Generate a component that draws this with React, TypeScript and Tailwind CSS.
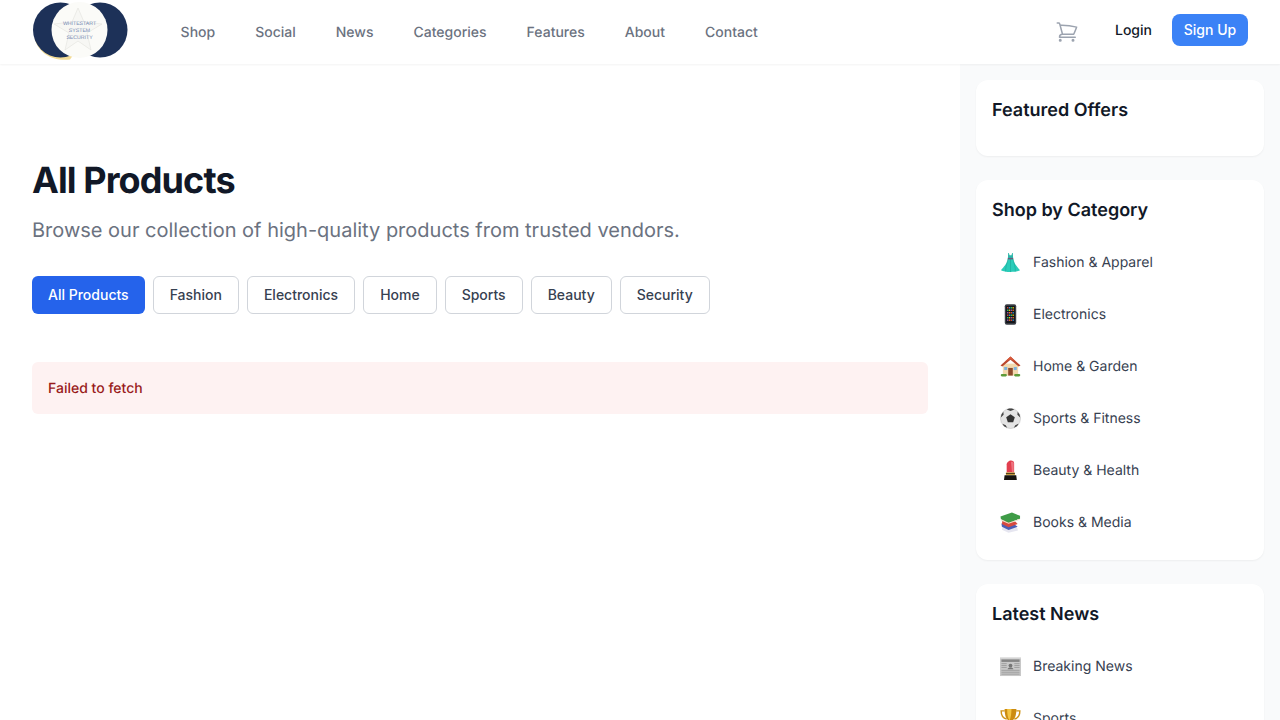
import React from "react";

const navLinks = ["Shop", "Social", "News", "Categories", "Features", "About", "Contact"];
const filters = ["All Products", "Fashion", "Electronics", "Home", "Sports", "Beauty", "Security"];

function Logo() {
  return (
    <svg viewBox="0 0 96 60" className="w-24 h-[60px] shrink-0">
      <path d="M2.5 38 C 6 53 20 61.5 38 59.5 L 42 54 L 20 48 Z" fill="#f3dc96" />
      <circle cx="28.5" cy="30" r="27.5" fill="#1d3158" />
      <circle cx="68" cy="30" r="27.5" fill="#1d3158" />
      <circle cx="47.5" cy="30" r="28" fill="#fbfbf8" />
      <polygon
        points="46,8 52,22 70,24 55,33 59,50 46,41 33,50 37,33 22,24 40,22"
        fill="#f7f7f4"
        stroke="#e2e2de"
        strokeWidth="0.6"
      />
      <g fill="#7388b3" fontFamily="Liberation Sans, sans-serif" fontSize="5.2" textAnchor="middle">
        <text x="47.5" y="24.5">WHITESTART</text>
        <text x="47.5" y="31.5">SYSTEM</text>
        <text x="47.5" y="38.5">SECURITY</text>
      </g>
    </svg>
  );
}

function Dress() {
  return (
    <svg viewBox="0 0 22 22" className="w-[21px] h-[21px]">
      <path d="M8.6 1 L9.3 1 L10 3.5 L12 3.5 L12.7 1 L13.4 1 L13.8 7 L8.2 7 Z" fill="#2bb7a9" />
      <path d="M8.4 7 L13.6 7 C14.5 12 18.5 16 21 19 C17 21.5 5 21.5 1 19 C3.5 16 7.5 12 8.4 7 Z" fill="#2accb9" />
      <path d="M8.4 7 C7.5 12 5.5 16 6 20.5 M11 7 L11 21 M13.6 7 C14.5 12 16.5 16 16 20.5" stroke="#18a596" strokeWidth="0.6" fill="none" />
      <rect x="8.2" y="6.2" width="5.6" height="1.5" fill="#6a5a7c" />
    </svg>
  );
}

function Phone() {
  const colors = ["#e74c3c", "#3498db", "#2ecc71", "#f1c40f", "#9b59b6", "#e67e22"];
  const dots = [];
  for (let r = 0; r < 6; r++) {
    for (let c = 0; c < 4; c++) {
      dots.push(<rect key={r + "-" + c} x={7.4 + c * 1.9} y={3.2 + r * 2.6} width="1.4" height="1.5" fill={colors[(r * 2 + c) % 6]} />);
    }
  }
  return (
    <svg viewBox="0 0 22 22" className="w-[21px] h-[21px]">
      <rect x="5" y="0.3" width="12" height="21.4" rx="2" fill="#3a3e45" />
      <rect x="6.4" y="2" width="9.2" height="18" fill="#14161a" />
      {dots}
    </svg>
  );
}

function House() {
  return (
    <svg viewBox="0 0 22 22" className="w-[21px] h-[21px]">
      <rect x="3" y="8" width="16" height="12.5" fill="#f3d9ae" />
      <path d="M11 0.5 L21.5 10 L19.5 11 L11 4 L2.5 11 L0.5 10 Z" fill="#b9472d" />
      <path d="M11 0.5 L17 6 L11 3.5 L5 6 Z" fill="#d85a3c" />
      <rect x="8.6" y="12.5" width="4.8" height="8" fill="#8c4a2b" />
      <rect x="4.4" y="11.5" width="3.2" height="3.2" fill="#7fb2dd" />
      <rect x="14.4" y="11.5" width="3.2" height="3.2" fill="#7fb2dd" />
      <rect x="0.8" y="18.8" width="6.4" height="2.6" rx="1.2" fill="#5d9b3a" />
      <rect x="14.8" y="18.8" width="6.4" height="2.6" rx="1.2" fill="#5d9b3a" />
    </svg>
  );
}

function Ball() {
  return (
    <svg viewBox="0 0 22 22" className="w-[21px] h-[21px]">
      <circle cx="11" cy="11" r="10.5" fill="#e4e4e4" stroke="#a8a8a8" strokeWidth="0.4" />
      <polygon points="11,6.5 15.5,9.8 13.8,15 8.2,15 6.5,9.8" fill="#333" />
      <path d="M7 1.5 L11 3.2 L15 1.5 L12.5 0.6 L9.5 0.6 Z" fill="#444" />
      <path d="M0.8 10 L3.8 7 L3.5 4 L1.5 6.8 Z M21.2 10 L18.2 7 L18.5 4 L20.5 6.8 Z" fill="#444" />
      <path d="M2.5 16.5 L6 18 L7.5 20.8 L4.2 19 Z M19.5 16.5 L16 18 L14.5 20.8 L17.8 19 Z" fill="#444" />
    </svg>
  );
}

function Lipstick() {
  return (
    <svg viewBox="0 0 22 22" className="w-[21px] h-[21px]">
      <path d="M7 13 L7 4.5 C7 2.5 9.5 0.5 11.5 0.5 C13.5 0.5 14.8 1.5 14.8 3.5 L14.8 13 Z" fill="#e23f4f" />
      <path d="M11.5 2 C13 1.5 14.4 2 14.4 3.5 L14.4 13 L12.6 13 Z" fill="#ee7480" />
      <rect x="6.2" y="13" width="9.4" height="3" fill="#c9a03f" />
      <rect x="6.2" y="13.9" width="9.4" height="0.8" fill="#2a2010" />
      <path d="M4.8 16 L17 16 L17.6 21 L4.2 21 Z" fill="#17130f" />
    </svg>
  );
}

function Books() {
  return (
    <svg viewBox="0 0 22 22" className="w-[21px] h-[21px]">
      <path d="M3 15 L18 16 L18.8 19.5 L9 21.8 L2 18.5 Z" fill="#e6e6f0" />
      <path d="M1.5 12 L16 13.5 L18.5 15.5 L9 18.8 L2 15.5 Z" fill="#4d5fb5" />
      <path d="M2.5 9 L16 10 L18.5 12.5 L9 16 L2 12.5 Z" fill="#d84a3f" />
      <path d="M0.5 4.8 L12.5 0.5 L21 4 L21 7 L9 11.2 L1 7.5 Z" fill="#3f9c47" />
      <path d="M1 7.5 L9 11.2 L21 7 L20.5 8.2 L9 12.4 L1.5 9.2 Z" fill="#ece6d0" />
    </svg>
  );
}

function Newspaper() {
  return (
    <svg viewBox="0 0 22 22" className="w-[21px] h-[21px]">
      <rect x="0" y="1.5" width="22" height="19.5" fill="#c8c8c8" />
      <rect x="0" y="1.5" width="22" height="1" fill="#e4e4e4" />
      <rect x="1.5" y="3.6" width="19" height="2.6" fill="#858585" />
      <path d="M1.5 8 H7 M1.5 10 H7 M1.5 12 H7 M15 8 H20.5 M15 10 H20.5 M15 12 H20.5 M1.5 15 H20.5 M1.5 17 H20.5 M1.5 19 H20.5" stroke="#939393" strokeWidth="0.8" />
      <circle cx="11" cy="10" r="2" fill="#757575" />
      <path d="M8 14 C8 11.5 14 11.5 14 14 Z" fill="#757575" />
    </svg>
  );
}

function Trophy() {
  return (
    <svg viewBox="0 0 22 22" className="w-[21px] h-[21px]">
      <path d="M5 3 H1.2 C1.2 8 3.5 11 7 11.5 M17 3 H20.8 C20.8 8 18.5 11 15 11.5" stroke="#cf9418" strokeWidth="1.5" fill="none" />
      <path d="M4.8 1 H17.2 C17.2 8 15.5 12 12.3 13.5 L12.3 17 L9.7 17 L9.7 13.5 C6.5 12 4.8 8 4.8 1 Z" fill="#cc8c10" />
      <path d="M7.5 1 H12 C12 7 11 11 10 13 C8.3 11 7.5 7 7.5 1 Z" fill="#f4c542" />
      <rect x="7" y="17" width="8" height="4" fill="#7a4a12" />
    </svg>
  );
}

const categories = [
  { icon: <Dress />, label: "Fashion & Apparel" },
  { icon: <Phone />, label: "Electronics" },
  { icon: <House />, label: "Home & Garden" },
  { icon: <Ball />, label: "Sports & Fitness" },
  { icon: <Lipstick />, label: "Beauty & Health" },
  { icon: <Books />, label: "Books & Media" },
];

const news = [
  { icon: <Newspaper />, label: "Breaking News" },
  { icon: <Trophy />, label: "Sports" },
];

function SideList({ items }: { items: { icon: React.ReactNode; label: string }[] }) {
  return (
    <ul className="flex flex-col gap-2">
      {items.map((item) => (
        <li key={item.label} className="h-11 px-2 flex items-center gap-3 text-sm text-[#374151]">
          {item.icon}
          <span className="pt-0.5">{item.label}</span>
        </li>
      ))}
    </ul>
  );
}

export default function App() {
  return (
    <div className="h-screen overflow-hidden bg-white flex flex-col font-['Inter',sans-serif] antialiased [text-rendering:geometricPrecision]">
      <header className="h-16 shrink-0 shadow-[0_1px_2px_rgba(0,0,0,0.05)] flex items-center px-8 relative">
        <div className="h-[60px] self-start">
          <Logo />
        </div>
        <nav className="ml-[52.6px] pt-0.5 flex gap-10 text-sm font-[450] text-[#6b7280]">
          {navLinks.map((link) => (
            <a key={link} href="#">
              {link}
            </a>
          ))}
        </nav>
        <div className="ml-auto flex items-center mb-1">
          <svg viewBox="0 0 24 24" fill="none" className="w-6 h-6 mt-1 text-[#9ca3af]" stroke="currentColor" strokeWidth="1.5" strokeLinecap="round" strokeLinejoin="round">
            <path d="M2.25 3h1.386c.51 0 .955.343 1.087.835l.383 1.437M7.5 14.25a3 3 0 00-3 3h15.75m-12.75-3h11.218c1.121-2.3 2.1-4.684 2.924-7.138a60.114 60.114 0 00-16.536-1.84M7.5 14.25L5.106 5.272M6 20.25a.75.75 0 11-1.5 0 .75.75 0 011.5 0zm12.75 0a.75.75 0 11-1.5 0 .75.75 0 011.5 0z" />
          </svg>
          <a href="#" className="ml-9 pt-0.5 text-sm font-[450] text-[#111827]">
            Login
          </a>
          <button className="ml-5 h-8 w-[76px] rounded-lg bg-[#3b82f6] text-sm font-[450] text-white">Sign Up</button>
        </div>
      </header>

      <div className="flex flex-1 min-h-0">
        <main className="w-[960px] shrink-0 px-8 pt-24">
          <h1 className="text-4xl font-bold tracking-tight text-[#111827]">All Products</h1>
          <p className="mt-4 text-xl text-[#6b7280]">Browse our collection of high-quality products from trusted vendors.</p>
          <div className="mt-8 flex gap-2">
            {filters.map((f, i) => (
              <button
                key={f}
                className={
                  i === 0
                    ? "h-[38px] px-4 rounded-md bg-[#2563eb] text-sm font-[450] text-white"
                    : "h-[38px] px-4 rounded-md border border-[#d1d5db] bg-white text-sm font-[450] text-[#374151]"
                }
              >
                {f}
              </button>
            ))}
          </div>
          <div className="mt-12 h-[52px] px-4 pt-0.5 flex items-center rounded-md bg-[#fef2f2] text-sm font-[450] text-[#991b1b]">
            Failed to fetch
          </div>
        </main>

        <aside className="flex-1 bg-[#f9fafb] p-4 flex flex-col gap-6">
          <section className="bg-white rounded-xl shadow-[0_1px_2px_rgba(0,0,0,0.05)] p-4 h-[76px] shrink-0">
            <h2 className="pt-px text-lg font-semibold text-[#111827]">Featured Offers</h2>
          </section>
          <section className="bg-white rounded-xl shadow-[0_1px_2px_rgba(0,0,0,0.05)] p-4 shrink-0">
            <h2 className="pt-px mb-[15px] text-lg font-semibold text-[#111827]">Shop by Category</h2>
            <SideList items={categories} />
          </section>
          <section className="bg-white rounded-xl shadow-[0_1px_2px_rgba(0,0,0,0.05)] p-4 shrink-0">
            <h2 className="pt-px mb-[15px] text-lg font-semibold text-[#111827]">Latest News</h2>
            <SideList items={news} />
          </section>
        </aside>
      </div>
    </div>
  );
}
